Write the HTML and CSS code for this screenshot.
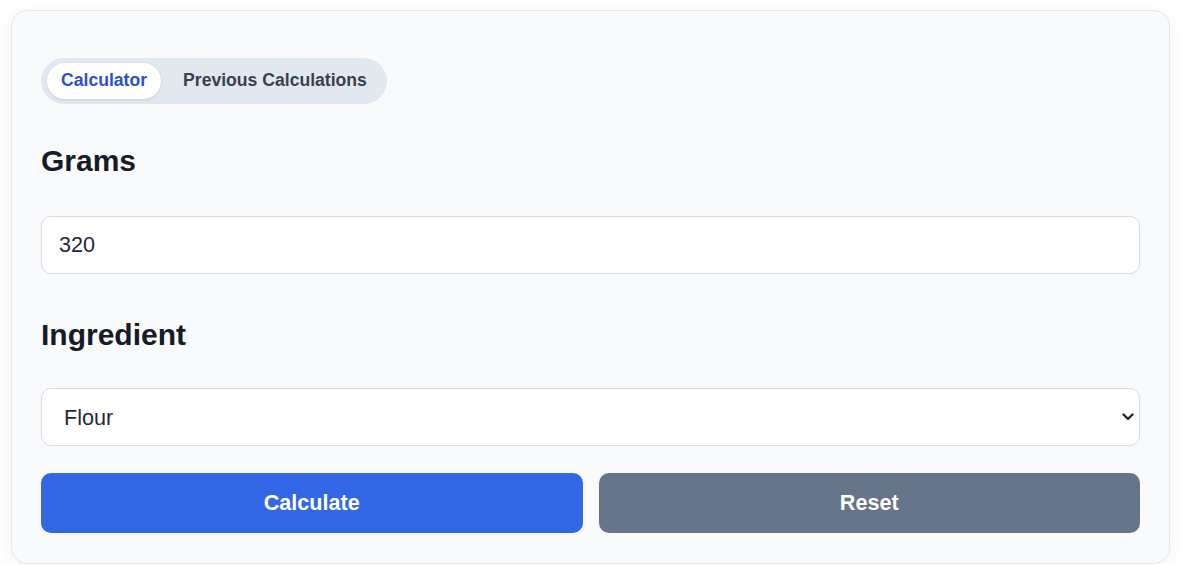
FILE: index.html
```html
<!DOCTYPE html>
<html lang="en">
<head>
<meta charset="utf-8">
<title>Grams Calculator</title>
<link rel="stylesheet" href="styles.css">
</head>
<body>
  <div class="card">
    <div class="tabs">
      <button class="tab active">Calculator</button>
      <button class="tab">Previous Calculations</button>
    </div>
    <h2 class="label">Grams</h2>
    <input class="field" type="text" value="320">
    <h2 class="label label-second">Ingredient</h2>
    <div class="select-wrap">
      <select class="field select">
        <option>Flour</option>
      </select>
      <svg class="chev" width="12" height="8" viewBox="0 0 12 8"><path d="M1.5 1.5 L6 6 L10.5 1.5" fill="none" stroke="#111827" stroke-width="2.2" stroke-linecap="round" stroke-linejoin="round"/></svg>
    </div>
    <div class="actions">
      <button class="btn btn-primary">Calculate</button>
      <button class="btn btn-secondary">Reset</button>
    </div>
  </div>
</body>
</html>
```

FILE: styles.css
```css
* { box-sizing: border-box; }

body {
  margin: 0;
  padding: 10px 0 0 11px;
  background: #ffffff;
  font-family: "Liberation Sans", Arial, sans-serif;
}

.card {
  width: 1159px;
  background: #f8fafc;
  border: 1px solid #e2e8f0;
  border-radius: 16px;
  padding: 29px 29px 30px 29px;
  box-shadow: 0 4px 24px rgba(15, 23, 42, 0.05);
}

.tabs {
  display: inline-flex;
  margin-top: 18px;
  padding: 5px 6px;
  background: #e2e8f0;
  border-radius: 999px;
  gap: 8px;
}

.tab {
  font-family: "Liberation Sans", Arial, sans-serif;
  font-weight: 700;
  font-size: 17.6px;
  height: 36px;
  padding: 0 14px 1px;
  border: none;
  background: transparent;
  color: #374151;
  border-radius: 999px;
}

.tab.active {
  background: #ffffff;
  color: #2b4fd6;
  box-shadow: 0 1px 3px rgba(15, 23, 42, 0.12);
}

.label {
  margin: 39px 0 37px;
  font-size: 30px;
  line-height: 36px;
  font-weight: 700;
  color: #161b26;
}

.label-second {
  margin-top: 43px;
  margin-bottom: 35px;
}

.field {
  display: block;
  width: 100%;
  height: 58px;
  padding: 0 17px;
  font-family: "Liberation Sans", Arial, sans-serif;
  font-size: 21.6px;
  color: #1f2937;
  background: #ffffff;
  border: 1px solid #d5dce6;
  border-radius: 10px;
  outline: none;
}

.select-wrap {
  position: relative;
}

.select {
  padding: 0 22px;
  appearance: none;
  -webkit-appearance: none;
}

.chev {
  position: absolute;
  right: 6px;
  top: 25px;
}

.actions {
  display: flex;
  gap: 16px;
  margin-top: 27px;
}

.btn {
  flex: 1;
  height: 60px;
  border: none;
  border-radius: 10px;
  color: #ffffff;
  font-family: "Liberation Sans", Arial, sans-serif;
  font-weight: 700;
  font-size: 21.6px;
}

.btn-primary { background: #3366e4; }
.btn-secondary { background: #667489; }
```
